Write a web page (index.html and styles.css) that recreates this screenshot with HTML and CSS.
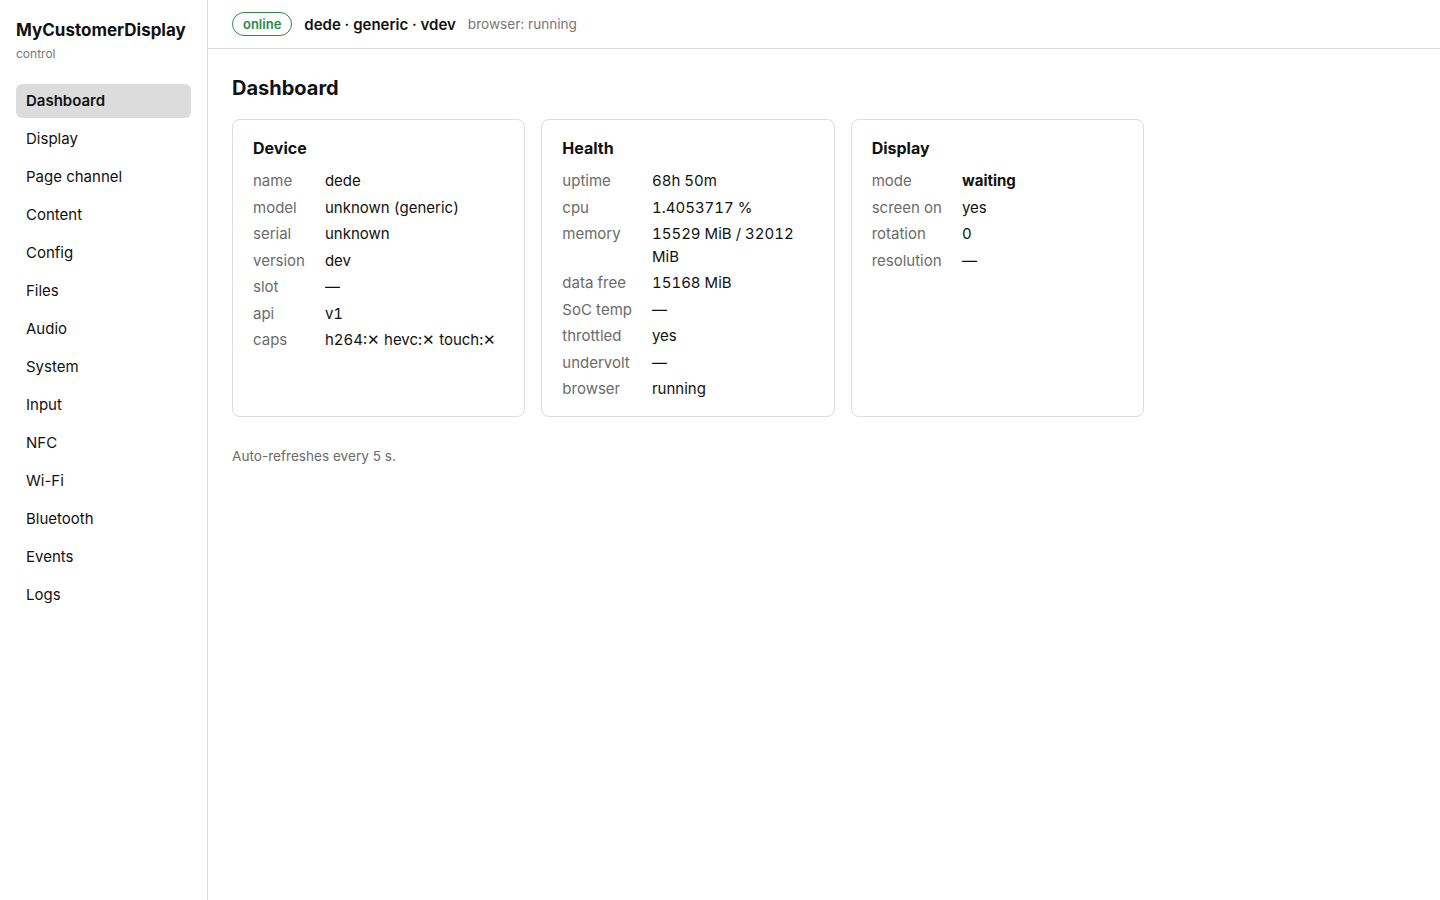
FILE: index.html
```html
<!DOCTYPE html>
<html lang="en">
<head>
  <meta charset="UTF-8" />
  <title>MyCustomerDisplay control</title>
  <meta name="viewport" content="width=device-width, initial-scale=1.0" />
  <link rel="stylesheet" href="styles.css">
</head>
<body>

<div class="app">
  <!-- sidebar -->
  <aside class="sidebar">
    <div class="brand">MyCustomerDisplay</div>
    <div class="brand-sub">control</div>
    <nav class="nav">
      <a class="active" href="#">Dashboard</a>
      <a href="#">Display</a>
      <a href="#">Page channel</a>
      <a href="#">Content</a>
      <a href="#">Config</a>
      <a href="#">Files</a>
      <a href="#">Audio</a>
      <a href="#">System</a>
      <a href="#">Input</a>
      <a href="#">NFC</a>
      <a href="#">Wi-Fi</a>
      <a href="#">Bluetooth</a>
      <a href="#">Events</a>
      <a href="#">Logs</a>
    </nav>
  </aside>

  <div class="right">
    <!-- top bar -->
    <header class="topbar">
      <span class="badge">online</span>
      <span class="ident">dede · generic · vdev</span>
      <span class="muted">browser: running</span>
    </header>

    <main class="main">
      <h1>Dashboard</h1>

      <div class="cards">
        <div class="card">
          <h2>Device</h2>
          <dl class="kv">
            <dt>name</dt><dd>dede</dd>
            <dt>model</dt><dd>unknown (generic)</dd>
            <dt>serial</dt><dd>unknown</dd>
            <dt>version</dt><dd>dev</dd>
            <dt>slot</dt><dd>—</dd>
            <dt>api</dt><dd>v1</dd>
            <dt>caps</dt><dd>h264:✕ hevc:✕ touch:✕</dd>
          </dl>
        </div>

        <div class="card">
          <h2>Health</h2>
          <dl class="kv">
            <dt>uptime</dt><dd>68h 50m</dd>
            <dt>cpu</dt><dd>1.4053717 %</dd>
            <dt>memory</dt><dd>15529 MiB / 32012 MiB</dd>
            <dt>data free</dt><dd>15168 MiB</dd>
            <dt>SoC temp</dt><dd>—</dd>
            <dt>throttled</dt><dd>yes</dd>
            <dt>undervolt</dt><dd>—</dd>
            <dt>browser</dt><dd>running</dd>
          </dl>
        </div>

        <div class="card">
          <h2>Display</h2>
          <dl class="kv">
            <dt>mode</dt><dd><b>waiting</b></dd>
            <dt>screen on</dt><dd>yes</dd>
            <dt>rotation</dt><dd>0</dd>
            <dt>resolution</dt><dd>—</dd>
          </dl>
        </div>
      </div>

      <p class="note">Auto-refreshes every 5 s.</p>
    </main>
  </div>
</div>

</body>
</html>
```

FILE: styles.css
```css
* { box-sizing: border-box; }
body {
  margin: 0;
  font-family: Inter, "Noto Sans", sans-serif;
  color: #111;
  background: #fff;
}
.app {
  display: flex;
  min-height: 100vh;
}

/* sidebar */
.sidebar {
  width: 208px;
  flex: none;
  border-right: 1px solid #ddd;
  padding: 20px 16px;
}
.brand {
  font-size: 17px;
  font-weight: 700;
  line-height: 20px;
}
.brand-sub {
  font-size: 12px;
  color: #777;
  margin-top: 6px;
  line-height: 16px;
}
.nav {
  display: flex;
  flex-direction: column;
  gap: 4px;
  margin-top: 22px;
}
.nav a {
  display: block;
  padding: 6px 10px;
  line-height: 22px;
  font-size: 15px;
  color: #111;
  text-decoration: none;
  border-radius: 6px;
}
.nav a.active {
  background: #dcdcdc;
  font-weight: 600;
}

/* right side */
.right {
  flex: 1;
  min-width: 0;
}
.topbar {
  height: 49px;
  border-bottom: 1px solid #ddd;
  display: flex;
  align-items: center;
  gap: 12px;
  padding: 0 24px;
}
.badge {
  display: inline-block;
  border: 1px solid #2a8a45;
  color: #2a8a45;
  border-radius: 999px;
  font-size: 13px;
  font-weight: 600;
  line-height: 22px;
  padding: 0 10px;
}
.ident {
  font-size: 15px;
  font-weight: 600;
}
.muted {
  font-size: 13.6px;
  color: #777;
}

.main {
  max-width: 960px;
  padding: 24px;
}
.main h1 {
  font-size: 20px;
  font-weight: 700;
  line-height: 28px;
  margin: 1px 0 17px;
}
.cards {
  display: grid;
  grid-template-columns: repeat(auto-fill, minmax(280px, 1fr));
  gap: 16px;
}
.card {
  border: 1px solid #ddd;
  border-radius: 8px;
  padding: 18px 20px 15px;
}
.card h2 {
  font-size: 16px;
  font-weight: 700;
  line-height: 20px;
  margin: 0 0 12px;
}
.kv {
  display: grid;
  grid-template-columns: auto 1fr;
  column-gap: 20px;
  row-gap: 4px;
  margin: 0;
  font-size: 15px;
  line-height: 22.5px;
}
.kv dt { color: #6b6b6b; }
.kv dd {
  margin: 0;
  font-variant-numeric: tabular-nums;
}
.kv dd b { font-weight: 700; }

.note {
  font-size: 13.6px;
  color: #6b6b6b;
  margin: 31px 0 0;
}
```
